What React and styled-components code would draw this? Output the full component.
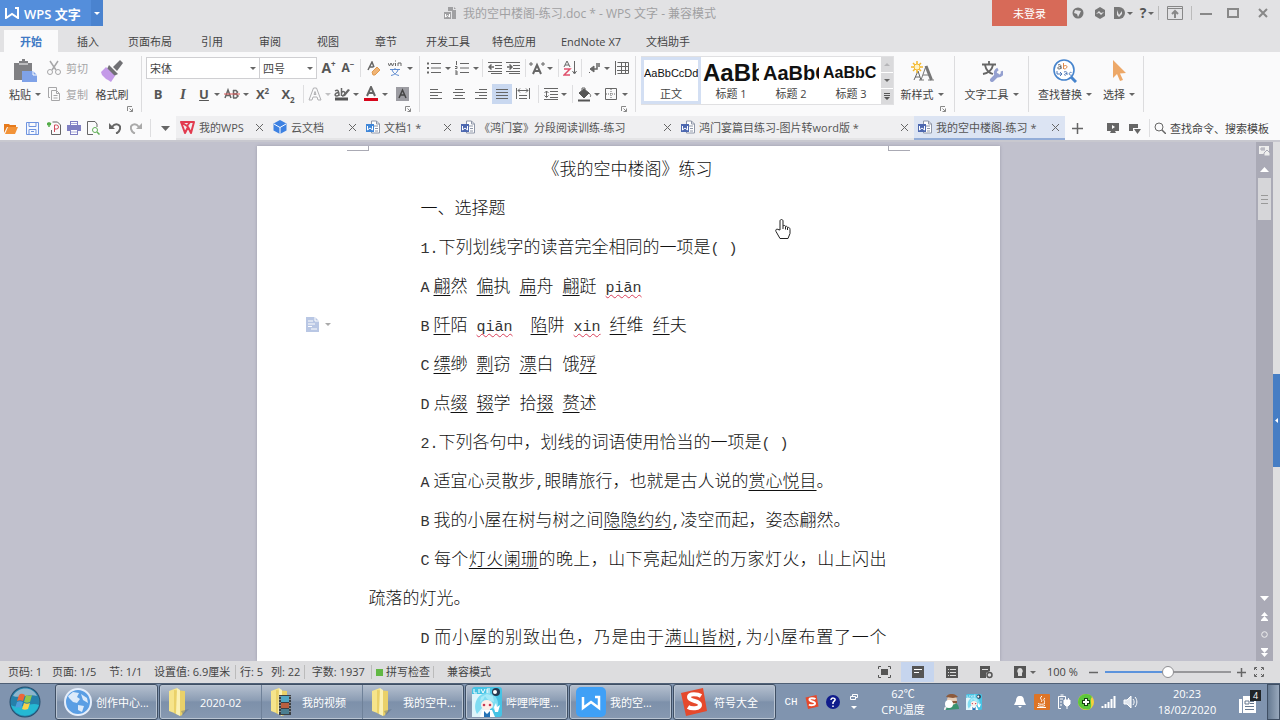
import { useState } from "react";
import styled, { createGlobalStyle, css } from "styled-components";

const GlobalStyle = createGlobalStyle`
  * {
    box-sizing: border-box;
  }
  body {
    margin: 0;
    font-family: "Open Sans", "Noto Sans CJK SC", sans-serif;
    font-size: 11px;
    color: #444;
  }
  button,
  select,
  input {
    margin: 0;
    padding: 0;
    border: 0;
    background: none;
    font: inherit;
    color: inherit;
  }
`;

const Window = styled.div`
  display: flex;
  flex-direction: column;
  height: 100vh;
  overflow: hidden;
  background: #e2e2e4;
`;

const Caret = styled.span`
  display: inline-block;
  flex: none;
  border: 3px solid transparent;
  border-top-color: ${(p) => p.$color || "#666"};
  border-bottom: 0;
`;

const Svg = ({ w = 16, h = w, children, ...rest }) => (
  <svg
    width={w}
    height={h}
    viewBox={`0 0 ${w} ${h}`}
    fill="none"
    stroke="#666"
    aria-hidden="true"
    {...rest}
  >
    {children}
  </svg>
);

/* Title bar */
const TitleBar = styled.header`
  display: flex;
  flex: none;
  height: 30px;
`;
const Brand = styled.button`
  display: flex;
  align-items: center;
  gap: 5px;
  width: 91px;
  height: 26px;
  padding-left: 5px;
  background: #548edb;
  color: #fff;
  font-size: 13px;
  font-weight: 600;
  white-space: nowrap;
`;
const BrandMenu = styled.button`
  display: flex;
  align-items: center;
  justify-content: center;
  width: 12px;
  height: 26px;
  background: #4a83cf;
`;
const DocTitle = styled.div`
  display: flex;
  flex: 1;
  align-items: center;
  justify-content: center;
  gap: 6px;
  height: 26px;
  padding-left: 64px;
  color: #a0a0a2;
  font-size: 12px;
  white-space: nowrap;
`;
const Login = styled.button`
  width: 75px;
  height: 26px;
  background: #d76a58;
  color: #fff;
`;
const WindowTool = styled.button`
  display: flex;
  align-items: center;
  justify-content: center;
  gap: 2px;
  width: ${(p) => p.$w || 22}px;
  height: 26px;
`;
const BarSep = styled.span`
  width: 1px;
  height: 14px;
  margin-top: 6px;
  background: #bbb;
`;

/* Ribbon tabs */
const TabList = styled.nav`
  display: flex;
  flex: none;
  height: 22px;
  padding-left: 4px;
`;
const RibbonTab = styled.button`
  width: ${(p) => p.$w || 58}px;
  height: 22px;
  white-space: nowrap;
  ${(p) =>
    p.$active &&
    css`
      margin-right: 1px;
      background: #fafafb;
      color: #4079c4;
      font-weight: 600;
    `}
`;

/* Ribbon */
const Ribbon = styled.div`
  display: flex;
  flex: none;
  height: 64px;
  padding: 4px 0;
  background: #fafafb;
`;
const Group = styled.section`
  position: relative;
  display: flex;
  height: 56px;
  padding: 0 ${(p) => p.$end || 0}px 0 ${(p) => p.$start || 0}px;
  border-right: 1px solid #dcdcde;
`;
const Rows = styled.div`
  display: flex;
  flex-direction: column;
  gap: 6px;
  padding-top: 2px;
`;
const Row = styled.div`
  display: flex;
  align-items: center;
  height: 20px;
`;
const Tool = styled.button`
  display: flex;
  flex: none;
  align-items: center;
  justify-content: center;
  width: ${(p) => p.$w || 20}px;
  height: 20px;
  background: ${(p) => (p.$active ? "#c9d8f0" : "none")};
`;
const ToolSep = styled.span`
  display: flex;
  flex: none;
  justify-content: center;
  width: ${(p) => p.$w || 8}px;
  &::after {
    content: "";
    width: 1px;
    height: 18px;
    background: #dedee0;
  }
`;
const SmallTool = styled.button`
  display: flex;
  align-items: center;
  gap: 4px;
  width: 44px;
  height: 20px;
  color: #a6a6a8;
  white-space: nowrap;
`;
const BigTool = styled.button`
  display: flex;
  flex-direction: column;
  align-items: center;
  width: ${(p) => p.$w || 44}px;
  height: 48px;
  padding-top: 2px;
`;
const BigIcon = styled.span`
  display: flex;
  align-items: center;
  height: 26px;
`;
const BigLabel = styled.span`
  display: flex;
  align-items: center;
  gap: 4px;
  height: 20px;
  white-space: nowrap;
`;
const Launcher = styled.button`
  position: absolute;
  right: ${(p) => p.$right || 8}px;
  bottom: 0;
  display: flex;
`;
const Field = styled.label`
  position: relative;
  display: flex;
  width: ${(p) => p.$w}px;
  height: 22px;
  border: 1px solid #cfcfd2;
  border-left-width: ${(p) => (p.$joined ? 0 : 1)}px;
  background: #fff;
  select {
    width: 100%;
    padding-left: 3px;
    appearance: none;
    outline: 0;
  }
  ${Caret} {
    position: absolute;
    top: 9px;
    right: 3px;
    pointer-events: none;
  }
`;
const Letter = styled.span`
  color: #555;
  font-size: ${(p) => p.$size || 13}px;
  font-weight: ${(p) => (p.$light ? 400 : 700)};
  line-height: 16px;
  ${(p) => p.$italic && "font-style: italic; font-family: 'Liberation Serif', serif;"}
  ${(p) => p.$underline && "text-decoration: underline;"}
  sup,
  sub {
    font-size: 8px;
    line-height: 0;
  }
`;

const Gallery = styled.div`
  display: flex;
  height: 49px;
  margin-left: 5px;
  border: 1px solid #e0e0e2;
  border-left: 0;
  background: #fff;
`;
const StyleCard = styled.button`
  display: flex;
  flex-direction: column;
  align-items: center;
  width: 60px;
  height: 47px;
  overflow: hidden;
  border: ${(p) => (p.$active ? "3px solid #d3dff3" : "0")};
  padding: ${(p) => (p.$active ? "0" : "3px 2px")};
`;
const Sample = styled.span`
  display: flex;
  flex: none;
  align-items: center;
  align-self: stretch;
  height: 26px;
  overflow: hidden;
  color: #111;
  font-family: "Liberation Sans", sans-serif;
  font-size: ${(p) => p.$size}px;
  font-weight: ${(p) => (p.$bold ? 700 : 400)};
`;
const StyleName = styled.span`
  line-height: 16px;
  white-space: nowrap;
`;
const GallerySteps = styled.div`
  display: flex;
  flex-direction: column;
  gap: 1px;
  width: 12px;
  button {
    display: flex;
    flex: 1;
    align-items: center;
    justify-content: center;
    background: #dadadc;
  }
`;

/* Quick access and document tabs */
const TabStrip = styled.div`
  display: flex;
  flex: none;
  align-items: center;
  height: 24px;
  background: #fafafb;
`;
const QuickTool = styled.button`
  display: flex;
  align-items: center;
  justify-content: center;
  width: ${(p) => p.$w || 21}px;
  height: 24px;
  margin-left: ${(p) => p.$gap || 0}px;
`;
const DocTab = styled.div`
  display: flex;
  align-items: center;
  width: ${(p) => p.$w}px;
  height: 24px;
  padding: 0 5px 0 4px;
  background: ${(p) => (p.$active ? "#dce4f3" : "#efeff1")};
  border-bottom: 2px solid ${(p) => (p.$active ? "#93add8" : "#e4e4e6")};
  white-space: nowrap;
`;
const DocTabName = styled.button`
  display: flex;
  flex: 1;
  align-items: center;
  gap: 4px;
  color: #555;
`;
const SearchBox = styled.label`
  display: flex;
  flex: 1;
  align-items: center;
  gap: 4px;
  padding-left: 1px;
  input {
    flex: 1;
    width: 60px;
    outline: 0;
  }
  input::placeholder {
    color: #444;
    opacity: 1;
  }
`;

/* Work area */
const Workspace = styled.main`
  display: flex;
  flex: 1;
  min-height: 0;
  border-top: 2px solid #c8c8cf;
`;
const Canvas = styled.div`
  display: flex;
  flex: 1;
  justify-content: center;
  padding-top: 4px;
  overflow: hidden;
  background: #c1c1cd;
`;
const Page = styled.article`
  position: relative;
  width: 743px;
  padding: 2px 113px 0 112px;
  background: #fff;
  box-shadow: 0 0 3px #9d9dab;
`;
const Corner = styled.span`
  position: absolute;
  top: 0;
  ${(p) => p.$side}: 90px;
  width: 22px;
  height: 5px;
  border-bottom: 1px solid #aaaab4;
  border-${(p) => (p.$side === "left" ? "right" : "left")}: 1px solid #aaaab4;
`;
const Para = styled.p`
  margin: 0;
  color: #111;
  font-family: "Noto Sans CJK SC", sans-serif;
  font-size: 17px;
  font-weight: 300;
  line-height: 39px;
  text-indent: 52px;
  text-align: justify;
  ${(p) => p.$full && "text-align-last: justify;"}
  u {
    text-decoration-thickness: 1px;
    text-decoration-skip-ink: none;
    text-underline-offset: 3px;
  }
`;
const Heading = styled(Para).attrs({ as: "h1" })`
  text-align: center;
  text-indent: 0;
`;
const Latin = styled.span`
  color: #333;
  font-family: "Liberation Mono", monospace;
  font-size: 15px;
  line-height: 1;
  white-space: pre;
`;
const Mark = styled(Latin)`
  margin-right: 4px;
`;
const Misspelt = styled(Latin)`
  text-decoration: underline wavy #d8405a 1px;
  text-decoration-skip-ink: none;
  text-underline-offset: 2px;
`;
const PasteTag = styled.button`
  position: absolute;
  top: 171px;
  left: 49px;
  display: flex;
  align-items: center;
  gap: 6px;
`;
const Hand = styled.span`
  position: absolute;
  top: 72px;
  left: 517px;
`;
const ScrollRail = styled.div`
  display: flex;
  flex-direction: column;
  align-items: center;
  width: 17px;
  background: #aaaab6;
`;
const RailButton = styled.button`
  display: flex;
  align-items: center;
  justify-content: center;
  width: 17px;
  height: 18px;
`;
const RailThumb = styled.div`
  display: flex;
  flex-direction: column;
  align-items: center;
  justify-content: center;
  gap: 3px;
  width: 13px;
  height: 42px;
  background: #d6d6d9;
  i {
    width: 7px;
    height: 1px;
    background: #999;
  }
`;
const Spacer = styled.span`
  flex: 1;
`;
const SideRail = styled.div`
  display: flex;
  flex-direction: column;
  justify-content: center;
  width: 7px;
  padding-top: 38px;
  background: #dedee0;
`;
const SideHandle = styled.button`
  display: flex;
  align-items: center;
  justify-content: center;
  width: 7px;
  height: 93px;
  background: #467dc4;
`;

/* Status bar */
const StatusBar = styled.footer`
  display: flex;
  flex: none;
  align-items: center;
  height: 22px;
  padding-left: 8px;
  background: #dddddf;
  white-space: nowrap;
`;
const StatusItem = styled.span`
  display: flex;
  align-items: center;
  gap: 3px;
  width: ${(p) => p.$w}px;
  line-height: 14px;
  ${(p) =>
    p.$ruled &&
    css`
      min-height: 12px;
      padding-left: 4px;
      border-left: 1px solid #bbb;
    `}
`;
const Spell = styled.i`
  width: 7px;
  height: 7px;
  background: #62b844;
`;
const ViewButton = styled.button`
  display: flex;
  align-items: center;
  justify-content: center;
  gap: 4px;
  width: ${(p) => p.$w || 34}px;
  height: 20px;
  padding-right: ${(p) => p.$end || 0}px;
  background: ${(p) => (p.$active ? "#c6d5ee" : "none")};
`;
const Zoom = styled.input.attrs({ type: "range" })`
  width: 126px;
  height: 16px;
  appearance: none;
  &::-webkit-slider-runnable-track {
    height: 2px;
    background: linear-gradient(90deg, #5c93dc 50%, #97979a 50%);
  }
  &::-webkit-slider-thumb {
    width: 12px;
    height: 12px;
    margin-top: -5px;
    appearance: none;
    border: 1px solid #8e8e92;
    border-radius: 50%;
    background: #fff;
  }
`;

/* Task bar */
const TaskBar = styled.footer`
  display: flex;
  flex: none;
  align-items: center;
  height: 37px;
  background: #8094af;
  border-top: 1px solid #4f6076;
  color: #fff;
  white-space: nowrap;
`;
const Start = styled.button`
  display: flex;
  align-items: center;
  justify-content: center;
  width: 55px;
  height: 36px;
  padding-right: 5px;
`;
const TaskGroup = styled.div`
  display: flex;
  height: 36px;
  margin-right: 1px;
  border: 1px solid #3f4f64;
  border-radius: 3px;
  background: linear-gradient(#b5c0cf, #8c9db4 45%, #7d90aa 50%, #8799b1);
  box-shadow: inset 0 0 0 1px #b9c4d2;
`;
const Task = styled.button`
  display: flex;
  align-items: center;
  width: 101px;
  padding-left: ${(p) => p.$pad || 6}px;
  text-align: left;
  & + & {
    border-left: 1px solid #6f8199;
  }
`;
const TaskIcon = styled.span`
  display: flex;
  width: ${(p) => p.$w || 34}px;
`;
const Tray = styled.div`
  display: flex;
  flex: 1;
  align-items: center;
  justify-content: flex-end;
  height: 36px;
`;
const TrayItem = styled.button`
  display: flex;
  flex-direction: column;
  align-items: center;
  justify-content: center;
  width: ${(p) => p.$w || 22}px;
  height: 34px;
  line-height: 16px;
  font-family: ${(p) => (p.$mono ? '"Liberation Mono", monospace' : "inherit")};
`;
const ShowDesktop = styled.button`
  width: 13px;
  height: 36px;
  border: 1px solid #3f4f64;
  background: linear-gradient(90deg, #667a92, #98a8bc);
`;

const LauncherIcon = () => (
  <Svg w={6} stroke="#888">
    <path d="M.5 5V.5H5M2.5 2.5l3 3M5.500 2.500v3h-3" />
  </Svg>
);
const CloseIcon = () => (
  <Svg w={9} stroke="#666">
    <path d="M1 1l7 7M8 1L1 8" />
  </Svg>
);

const WIcon = ({ color = "#4d68b0" }) => (
  <Svg w={14}>
    <path d="M5.500 1h5l3 3v9h-8z" fill="#fff" stroke="#8e96a8" />
    <path d="M10.500 1v3h3M8 6h4M9 8.500h3M9 11h3" stroke="#8e96a8" />
    <rect y="4" width="8" height="8" fill={color} stroke="none" />
    <path d="M1.500 6v4l2.500-2 2.500 2V6" stroke="#fff" />
  </Svg>
);
const WpsIcon = () => (
  <Svg w={15} h={13}>
    <path d="M1 1h13l-3 11-3-6-3 6L1 1l6 4 3-4" stroke="#e23b4f" strokeWidth="2" strokeLinejoin="round" />
  </Svg>
);
const CloudIcon = () => (
  <Svg w={14}>
    <path d="M7 0l6.500 3.500v7L7 14 .5 10.500v-7z" fill="#3d81e2" stroke="none" />
    <path d="M1 4l6 3.500L13 4M7 7.500V14" stroke="#fff" />
  </Svg>
);

const Lines = ({ rows, dots }) => (
  <Svg w={14}>
    <path d={rows.map(([x, w], i) => `M${x} ${dots ? 2.5 + i * 4.5 : 2.5 + i * 3}h${w}`).join("")} />
    {dots === "bullet" && <path d="M0 2.500h2M0 7h2M0 11.500h2" strokeWidth="2" />}
    {dots === "number" && <path d="M1.500 0v4M0 5.500h2v2H0M0 10h2v4H0M0 12h2" strokeWidth="1" />}
  </Svg>
);
const IndentIcon = ({ flip }) => (
  <Svg w={14}>
    <path d="M0 1.500h14M7 4.500h7M7 7.500h7M0 10.500h14M3 12.500h11" />
    <path d={flip ? "M1 6h5M3.500 3.500L6 6 3.500 8.500" : "M1 6h5M3.500 3.500L1 6l2.500 2.500"} strokeWidth="1.500" />
  </Svg>
);

const FolderIcon = ({ media }) => (
  <Svg w={28} h={30} stroke="none">
    <path d="M3 4l8-3v26l-8-3z" fill="#f6e48b" />
    <path d="M8 3l11 1v20l-4 5-7-3z" fill="#ead169" />
    <path d="M11 1l3 2v26l-4-2z" fill="#fbf1b5" />
    <path d="M15 24l8-2-6 6z" fill="#52647c" opacity=".4" />
    {media && (
      <>
        <path d="M11 8h12v20H11z" fill="#3b4045" />
        <path d="M13 9h8v6h-8z" fill="#4fa7c5" />
        <path d="M13 16h8v5h-8z" fill="#b95f40" />
        <path d="M13 22h8v5h-8z" fill="#4b7e91" />
        <path d="M12 9v18M22 9v18" stroke="#d5d8dc" strokeDasharray="1 2" />
      </>
    )}
  </Svg>
);
const GirlIcon = ({ w = 30 }) => (
  <svg width={w} height={w} viewBox="0 0 30 30" aria-hidden="true">
    <rect width="30" height="30" rx="3" fill="#46c3e4" />
    <path d="M0 7h18v23H0z" fill="#dff5fb" />
    <path d="M2 2v4h3M7 2v4M9 2l2 4 2-4M18 2h-3v4h3M15 4h3" stroke="#fff" fill="none" />
    <path d="M5 27C0 17 6 6 15 6c10 0 14 11 9 18l-5-4-9 1z" fill="#7fdcf2" />
    <circle cx="24" cy="5" r="4" fill="#26384f" />
    <circle cx="23" cy="5" r="2" fill="#fff" />
    <ellipse cx="15" cy="18" rx="6" ry="5" fill="#fdeee8" />
    <path d="M8 15c3-1 4-4 5-6 2 4 6 5 9 6l-1-6-6-2-6 3z" fill="#a7eaf8" />
    <circle cx="12" cy="18" r="1.300" fill="#c63852" />
    <circle cx="18" cy="18" r="1.300" fill="#c63852" />
    <path d="M10 23h10l3 7H8z" fill="#fff" />
    <path d="M12 24l3 3 3-3v6h-6z" fill="#2572b5" />
    <path d="M22 20l2-4 1 4 3-2-2 7h-3z" fill="#fff" />
  </svg>
);
const SogouIcon = ({ w = 28 }) => (
  <svg width={w} height={w} viewBox="0 0 28 28" fill="none" aria-hidden="true">
    <path d="M1 5L23 0l4 23-21 5z" fill="#e5492c" />
    <path d="M21 8c-3-2-12-3-12 1 0 5 11 3 11 8 0 4-9 4-12 2" stroke="#fff" strokeWidth="4" />
  </svg>
);

const ribbonTabs = [
  ["开始", 54],
  ["插入", 58],
  ["页面布局", 66],
  ["引用", 58],
  ["审阅", 58],
  ["视图", 58],
  ["章节", 58],
  ["开发工具", 66],
  ["特色应用", 66],
  ["EndNote X7", 88],
  ["文档助手", 66],
];

const docTabs = [
  { name: "我的WPS", w: 93, icon: <WpsIcon /> },
  { name: "云文档", w: 93, icon: <CloudIcon /> },
  { name: "文档1 *", w: 95, icon: <WIcon color="#3f86d8" /> },
  { name: "《鸿门宴》分段阅读训练-练习", w: 220, icon: <WIcon /> },
  { name: "鸿门宴篇目练习-图片转word版 *", w: 237, icon: <WIcon /> },
  { name: "我的空中楼阁-练习 *", w: 151, icon: <WIcon /> },
];

const styleCards = [
  { name: "正文", sample: "AaBbCcDd", size: 11 },
  { name: "标题 1", sample: "AaBb", size: 24, bold: true },
  { name: "标题 2", sample: "AaBbC", size: 20, bold: true },
  { name: "标题 3", sample: "AaBbC", size: 16, bold: true },
];

const Title = () => (
  <TitleBar>
    <Brand>
      <Svg w={14} h={12} stroke="#fff">
        <path d="M1 1v10l6-4 6 4V1h-3" strokeWidth="2" />
      </Svg>
      WPS 文字
    </Brand>
    <BrandMenu aria-label="菜单">
      <Caret $color="#fff" />
    </BrandMenu>
    <DocTitle>
      <Svg w={14} stroke="none">
        <path d="M5 1h5v3h3v9H9V5H5z" fill="#a0a0a2" />
        <path d="M11 1l2 2h-2zM1 6h7v7H1z" fill="#a0a0a2" />
        <path d="M2.500 8v3l2-1.500 2 1.500V8" stroke="#fff" />
      </Svg>
      我的空中楼阁-练习.doc * - WPS 文字 - 兼容模式
    </DocTitle>
    <Login>未登录</Login>
    <WindowTool aria-label="安全">
      <Svg w={12} stroke="none">
        <circle cx="6" cy="6" r="5.500" fill="#777" />
        <path d="M3 3l6 1-3 6-1-3-3-1z" fill="#e2e2e4" />
      </Svg>
    </WindowTool>
    <WindowTool aria-label="同步">
      <Svg w={12} stroke="none">
        <path d="M6 0l5 3v6l-5 3-5-3V3z" fill="#777" />
        <path d="M2 7l3-3 2 2 3-1-3 3-2-2z" fill="#e2e2e4" />
      </Svg>
    </WindowTool>
    <WindowTool $w={25} aria-label="稻壳">
      <Svg w={11} h={12} stroke="none">
        <path d="M0 0h5a6 6 0 010 12H0z" fill="#777" />
        <path d="M3 3v5l2 2 3-3V4L5 8z" fill="#e2e2e4" />
      </Svg>
      <Caret />
    </WindowTool>
    <WindowTool aria-label="帮助">
      <Letter $size={14}>?</Letter>
      <Caret />
    </WindowTool>
    <BarSep />
    <WindowTool $w={32} aria-label="收起功能区">
      <Svg w={16} h={14} stroke="#888">
        <path d="M.5.5h15v13H.5zM.5 2.500h15" />
        <path d="M8 12V5M5 8l3-3 3 3" strokeWidth="2" />
      </Svg>
    </WindowTool>
    <BarSep />
    <WindowTool $w={28} aria-label="最小化">
      <Svg w={12}>
        <path d="M0 7h12" stroke="#888" strokeWidth="2" />
      </Svg>
    </WindowTool>
    <WindowTool $w={26} aria-label="最大化">
      <Svg w={12} h={10}>
        <path d="M1 1h10v8H1z" stroke="#888" strokeWidth="2" />
      </Svg>
    </WindowTool>
    <WindowTool $w={34} aria-label="关闭">
      <Svg w={10}>
        <path d="M1 1l8 8M9 1L1 9" stroke="#888" strokeWidth="2" />
      </Svg>
    </WindowTool>
  </TitleBar>
);

const ClipboardGroup = () => (
  <Group $start={4} $end={7}>
    <BigTool $w={42}>
      <BigIcon>
        <Svg w={24} stroke="none">
          <path d="M1 4h5V2h3V0h3v2h3v2h4v9h-7v8H1z" fill="#808083" />
          <path d="M6 5h9" stroke="#fafafb" />
          <path d="M9 12h11l4 4v7H9z" fill="#7fa2e8" />
          <path d="M20 12v4h4" stroke="#fff" />
        </Svg>
      </BigIcon>
      <BigLabel>
        粘贴
        <Caret />
      </BigLabel>
    </BigTool>
    <Rows>
      <SmallTool>
        <Svg w={16} stroke="#a6a6a8">
          <path d="M4 1l6 9M12 1L6 10" strokeWidth="1.500" />
          <circle cx="4" cy="12" r="2.500" />
          <circle cx="12" cy="12" r="2.500" />
        </Svg>
        剪切
      </SmallTool>
      <SmallTool>
        <Svg w={16} stroke="#a6a6a8">
          <path d="M4 11.500H2.500v-10h8V4" />
          <path d="M5.500 4.500h5l3 3v7h-8zM10.500 4.500v3h3M7.500 9.500h4M7.500 12h4" />
        </Svg>
        复制
      </SmallTool>
    </Rows>
    <BigTool>
      <BigIcon>
        <Svg w={24} stroke="none">
          <path d="M9 6l9 9-4 2-7-7z" fill="#707074" />
          <path d="M13 8l7-7 3 3-6 8z" fill="#707074" />
          <path d="M6 8l9 9-4 6-3-2-2-1-4-4-1-3z" fill="#c49ae8" />
        </Svg>
      </BigIcon>
      <BigLabel>格式刷</BigLabel>
    </BigTool>
    <Launcher aria-label="剪贴板">
      <LauncherIcon />
    </Launcher>
  </Group>
);

const FontGroup = () => (
  <Group $start={4} $end={3}>
    <Rows>
      <Row>
        <Field $w={114}>
          <select aria-label="字体">
            <option>宋体</option>
          </select>
          <Caret />
        </Field>
        <Field $w={57} $joined>
          <select aria-label="字号">
            <option>四号</option>
          </select>
          <Caret />
        </Field>
        <Tool $w={23}>
          <Letter $size={14}>
            A<sup>+</sup>
          </Letter>
        </Tool>
        <Tool $w={16}>
          <Letter $size={12}>
            A<sup>−</sup>
          </Letter>
        </Tool>
        <ToolSep />
        <Tool aria-label="清除格式">
          <Svg w={14} h={15}>
            <path d="M1 9l4-8 2 5M2.500 6h4" strokeWidth="1.500" />
            <path d="M5 11l5-5 3 3-5 5H6z" fill="#f0b475" stroke="#e09a50" />
          </Svg>
        </Tool>
        <Tool $w={22} aria-label="拼音指南">
          <Svg w={14} h={16}>
            <path d="M0 3l1.500 3L3 3l1.500 3L6 3M7.500 3v3M7.500.5v1M10 6V3h3v3" />
            <path d="M2 9.500h10M7 8v2M10 10c-1 3-4 5-7 5.500M4 10c1 3 4 5 7 5.500" stroke="#5d8bd0" />
          </Svg>
        </Tool>
        <Tool $w={8}>
          <Caret />
        </Tool>
      </Row>
      <Row>
        <Tool $w={24}>
          <Letter>B</Letter>
        </Tool>
        <Tool $w={26}>
          <Letter $size={15} $italic>
            I
          </Letter>
        </Tool>
        <Tool $w={16}>
          <Letter $underline>U</Letter>
        </Tool>
        <Tool $w={10}>
          <Caret />
        </Tool>
        <Tool aria-label="删除线">
          <Svg w={16} h={14}>
            <path
              d="M1 11l3-8 3 8M2 8.500h4M9.500 3v8M9 3.500h3l1.500 1.500L12 7h-2.500H12l2 2-2 2H9"
              strokeWidth="1.500"
            />
            <path d="M0 7h16" stroke="#dc5a5a" />
          </Svg>
        </Tool>
        <Tool $w={8}>
          <Caret />
        </Tool>
        <Tool $w={25}>
          <Letter>
            X<sup>2</sup>
          </Letter>
        </Tool>
        <Tool $w={26}>
          <Letter>
            X<sub>2</sub>
          </Letter>
        </Tool>
        <ToolSep $w={5} />
        <Tool $w={17} aria-label="文字效果">
          <Svg w={14}>
            <path d="M1 13L5.500 1h3L13 13h-3l-1-3H5l-1 3zM6 7.500h2L7 4.500z" stroke="#b0b0b3" />
          </Svg>
        </Tool>
        <Tool $w={9}>
          <Caret $color="#c0c0c2" />
        </Tool>
        <Tool aria-label="突出显示">
          <Svg w={16} h={14}>
            <path d="M1 4c3-2 4 0 4 5M5 6C1 5 0 9 2.500 9S5 8 5 7M7.500 1v8M8 5c4-2 4 4 0 4" strokeWidth="1.500" />
            <path d="M9 8l5-6 2 1-5 6H9z" fill="#666" stroke="none" />
            <path d="M1 12h13" strokeWidth="3" stroke="#555" />
          </Svg>
        </Tool>
        <Tool $w={8}>
          <Caret />
        </Tool>
        <Tool $w={22} aria-label="字体颜色">
          <Svg w={14} h={16}>
            <path d="M3 10l4-9 4 9M4 7h6" strokeWidth="2" />
            <path d="M0 13.500h14" stroke="#d7061b" strokeWidth="3" />
          </Svg>
        </Tool>
        <Tool $w={6}>
          <Caret />
        </Tool>
        <Tool $w={28} aria-label="字符底纹">
          <Svg w={13} h={14}>
            <path d="M0 0h13v14H0z" fill="#9c9ca2" stroke="none" />
            <path d="M3 11l3.500-8 3.500 8M4 8h5" stroke="#444" strokeWidth="1.500" />
          </Svg>
        </Tool>
      </Row>
    </Rows>
    <Launcher aria-label="字体设置">
      <LauncherIcon />
    </Launcher>
  </Group>
);

const ParagraphGroup = () => (
  <Group $start={4} $end={3}>
    <Rows>
      <Row>
        <Tool aria-label="项目符号">
          <Lines dots="bullet" rows={[[4, 10], [4, 10], [4, 10]]} />
        </Tool>
        <Tool $w={7}>
          <Caret />
        </Tool>
        <Tool $w={22} aria-label="编号">
          <Lines dots="number" rows={[[5, 9], [5, 9], [5, 9]]} />
        </Tool>
        <Tool $w={6}>
          <Caret />
        </Tool>
        <ToolSep $w={6} />
        <Tool $w={19} aria-label="减少缩进量">
          <IndentIcon />
        </Tool>
        <Tool $w={18} aria-label="增加缩进量">
          <IndentIcon flip />
        </Tool>
        <ToolSep $w={6} />
        <Tool $w={18} aria-label="中文版式">
          <Svg w={16} h={15}>
            <path d="M4 13l4-9 4 9M5 10h6" strokeWidth="2" />
            <path d="M0 3h4M2 1v4M12 3h4M14 1v4" />
          </Svg>
        </Tool>
        <Tool $w={8}>
          <Caret />
        </Tool>
        <ToolSep />
        <Tool $w={15} aria-label="排序">
          <Svg w={14} h={16}>
            <path d="M1 7l3-6 3 6M2 5h4" />
            <path d="M1 9h6l-6 6h6" stroke="#e0506c" strokeWidth="1.500" />
            <path d="M11.500 1v12M9.500 11l2 3 2-3" />
          </Svg>
        </Tool>
        <ToolSep />
        <Tool $w={17} aria-label="段落标记">
          <Svg w={12}>
            <path d="M9 1v6H4M11 1v4" strokeWidth="1.500" />
            <path d="M6 4v6L2 7zM1 10l1 1" fill="#666" />
          </Svg>
        </Tool>
        <Tool $w={10}>
          <Caret />
        </Tool>
        <Tool aria-label="插入表格">
          <Svg w={14}>
            <path d="M2.500 1.500h11v11h-11M2 5.500h12M2 9.500h12M6.500 1v12M10.500 1v12M.5 0v14" />
          </Svg>
        </Tool>
      </Row>
      <Row>
        <Tool $w={24} aria-label="左对齐">
          <Lines rows={[[1, 8], [1, 12], [1, 8], [1, 12]]} />
        </Tool>
        <Tool $w={22} aria-label="居中">
          <Lines rows={[[3, 8], [1, 12], [3, 8], [1, 12]]} />
        </Tool>
        <Tool $w={22} aria-label="右对齐">
          <Lines rows={[[5, 8], [1, 12], [5, 8], [1, 12]]} />
        </Tool>
        <Tool $active aria-label="两端对齐">
          <Lines rows={[[1, 12], [1, 12], [1, 12], [1, 12]]} />
        </Tool>
        <Tool $w={22} aria-label="分散对齐">
          <Svg w={14}>
            <path d="M.5 1v11M13.500 1v11M2 3.500h10M4 1.500l-2 2 2 2M10 1.500l2 2-2 2M3 8.500h8M3 11.500h8" />
          </Svg>
        </Tool>
        <ToolSep />
        <Tool $w={18} aria-label="行距">
          <Svg w={14}>
            <path d="M0 1.500h14M6 4.500h8M6 7.500h8M6 10.500h8M0 12.500h14M2.500 4v6M.5 6l2-2 2 2M.5 8.500l2 2 2-2" />
          </Svg>
        </Tool>
        <Tool $w={8}>
          <Caret />
        </Tool>
        <ToolSep />
        <Tool $w={17} aria-label="底纹颜色">
          <Svg w={15}>
            <path d="M2 6l5-4 5 4-5 5z" fill="#555" stroke="#555" />
            <path d="M5 4V1h3v2M12 6c2 2 2 3 1 4" />
            <path d="M1 13.500h12" strokeWidth="2" stroke="#555" />
          </Svg>
        </Tool>
        <Tool $w={8}>
          <Caret />
        </Tool>
        <Tool aria-label="边框">
          <Svg w={12}>
            <path d="M.5.5h11v11H.5z" />
            <path d="M6 1v10M1 6h10" strokeDasharray="1 1" />
          </Svg>
        </Tool>
        <Tool $w={8}>
          <Caret />
        </Tool>
      </Row>
    </Rows>
    <Launcher aria-label="段落设置">
      <LauncherIcon />
    </Launcher>
  </Group>
);

const StyleGroup = () => {
  const [current, setCurrent] = useState("正文");
  return (
    <Group $end={4}>
      <Gallery>
        {styleCards.map((card) => (
          <StyleCard key={card.name} $active={card.name === current} onClick={() => setCurrent(card.name)}>
            <Sample $size={card.size} $bold={card.bold}>
              {card.sample}
            </Sample>
            <StyleName>{card.name}</StyleName>
          </StyleCard>
        ))}
        <GallerySteps>
          <button aria-label="上一行">
            <Svg w={6} h={3} stroke="none">
              <path d="M0 3l3-3 3 3z" fill="#b5b5b8" />
            </Svg>
          </button>
          <button aria-label="下一行">
            <Caret />
          </button>
          <button aria-label="更多样式">
            <Svg w={6} h={7} stroke="none">
              <path d="M0 0h6v1H0zM0 2h6v1H0zM0 4h6L3 7z" fill="#555" />
            </Svg>
          </button>
        </GallerySteps>
      </Gallery>
      <BigTool $w={56}>
        <BigIcon>
          <Svg w={24} h={22}>
            <path d="M4 20l4-9 3 9M5 17h5" />
            <path d="M11 20l5-14M13 15h7" stroke="#777" />
            <path d="M16 6l5.500 14" strokeWidth="3" stroke="#777" />
            <path d="M9 20h5M18 20h6" stroke="#777" />
            <path d="M7 1v12M1 7h12M3 3l8 8M11 3l-8 8" stroke="#f3b92f" strokeWidth="1.500" />
            <circle cx="7" cy="7" r="3" fill="#fff3c6" stroke="#f3b92f" />
          </Svg>
        </BigIcon>
        <BigLabel>
          新样式
          <Caret />
        </BigLabel>
      </BigTool>
      <Launcher aria-label="样式设置">
        <LauncherIcon />
      </Launcher>
    </Group>
  );
};

const EditGroups = () => (
  <>
    <Group>
      <BigTool $w={73}>
        <BigIcon>
          <Svg w={22}>
            <path d="M1 4.500h14M8 1v3M12 5c-1 5-5 8-10 9M4 5c1 5 4 8 8 9" stroke="#666" strokeWidth="1.800" />
            <path d="M11 20l5-5" stroke="#94a0d0" strokeWidth="4" strokeLinecap="round" />
            <path d="M17 9c-4 2-3 7 0 7s5-2 4-5" stroke="#94a0d0" strokeWidth="3" />
          </Svg>
        </BigIcon>
        <BigLabel>
          文字工具
          <Caret />
        </BigLabel>
      </BigTool>
    </Group>
    <Group $end={6}>
      <BigTool $w={72}>
        <BigIcon>
          <Svg w={24}>
            <circle cx="11" cy="11" r="10" fill="#fff" stroke="#4684cd" strokeWidth="1.600" />
            <path d="M18 18l5 5" stroke="#4684cd" strokeWidth="3" />
            <path d="M5 6c3-1 3 0 3 4M8 7.500c-4 0-4 2.500-2 2.500S8 9 8 8" />
            <path d="M10.500 4v6M11 7c4-2 4 3 0 3" stroke="#e08a4a" />
            <path
              d="M4 12v3h4M7 13l2 2-2 2M11 13c3-1 3 0 3 3M14 14.500c-3 0-3 2-1.500 2M18.500 13.500c-3-1-3 3.500 0 2.500"
              stroke="#4f79b8"
            />
          </Svg>
        </BigIcon>
        <BigLabel>
          查找替换
          <Caret />
        </BigLabel>
      </BigTool>
      <BigTool $w={36}>
        <BigIcon>
          <Svg w={16} h={22} stroke="none">
            <path d="M2 0l13 13-6 .5L12 20l-3 1-3-7-4 4z" fill="#eda868" />
          </Svg>
        </BigIcon>
        <BigLabel>
          选择
          <Caret />
        </BigLabel>
      </BigTool>
    </Group>
  </>
);

const Documents = () => (
  <TabStrip>
    <QuickTool $w={22} aria-label="打开">
      <Svg w={14} h={12} stroke="none">
        <path d="M0 2h5l1 1h6v2H3l-3 6z" fill="#e67a1c" />
        <path d="M4 5h10l-3 7H1z" fill="#f29338" />
      </Svg>
    </QuickTool>
    <QuickTool aria-label="保存">
      <Svg w={13}>
        <path d="M.5.5h12v12H.5zM3 .5v4h7v-4M3 12.500v-5h7v5" stroke="#6e93df" fill="#f4f8ff" />
        <path d="M5 9.500h3" stroke="#6e93df" />
      </Svg>
    </QuickTool>
    <QuickTool aria-label="输出为PDF">
      <Svg w={14}>
        <path d="M5.500 1h5l3 3v9.500h-9V9" />
        <path d="M7.500 11V4h2a2 2 0 010 4H7" stroke="#d44d5e" />
        <path d="M0 3.500h4M2 1v5M0 2l2 1.500L4 2" stroke="#53ac48" strokeWidth="1.500" />
      </Svg>
    </QuickTool>
    <QuickTool $w={19} aria-label="打印">
      <Svg w={14} stroke="none">
        <path d="M3 0h8v4h3v6h-3v4H3v-4H0V4h3z" fill="#7f7fc2" />
        <path d="M4 1h6v3H4zM4 9h6v4H4z" fill="#fff" />
        <path d="M4 2.500h6M4 11h6" stroke="#aaaada" />
      </Svg>
    </QuickTool>
    <QuickTool aria-label="打印预览">
      <Svg w={13} h={14}>
        <path d="M10 6V3L8 .5H.5v13H6" />
        <circle cx="8" cy="9" r="2.500" stroke="#5fae55" fill="#fff" />
        <path d="M10 11l2.500 2.500" stroke="#5fae55" strokeWidth="1.500" />
      </Svg>
    </QuickTool>
    <QuickTool aria-label="撤销">
      <Svg w={12}>
        <path d="M3 5c4-5 9-2 8 2-.5 2-2 4-4 4.500" strokeWidth="2" />
        <path d="M0 1v6h6z" fill="#666" stroke="none" />
      </Svg>
    </QuickTool>
    <QuickTool aria-label="恢复">
      <Svg w={12}>
        <path d="M9 5C5 0 0 3 1 7c.5 2 2 4 4 4.500" strokeWidth="2" stroke="#aaa" />
        <path d="M12 1v6H6z" fill="#aaa" stroke="none" />
      </Svg>
    </QuickTool>
    <ToolSep $w={8} />
    <QuickTool $w={22} aria-label="自定义快速访问工具栏">
      <Svg w={9} h={5} stroke="none">
        <path d="M0 0h9L4.500 5z" fill="#666" />
      </Svg>
    </QuickTool>
    {docTabs.map((tab, i) => (
      <DocTab key={tab.name} $w={tab.w} $active={i === docTabs.length - 1}>
        <DocTabName>
          {tab.icon}
          {tab.name}
        </DocTabName>
        <button aria-label="关闭标签">
          <CloseIcon />
        </button>
      </DocTab>
    ))}
    <QuickTool $w={24} aria-label="新建">
      <Svg w={11}>
        <path d="M0 5.500h11M5.500 0v11" strokeWidth="1.500" />
      </Svg>
    </QuickTool>
    <QuickTool $w={24} $gap={12} aria-label="播放">
      <Svg w={12} h={11} stroke="none">
        <path d="M0 0h12v8H8l1 2H3l1-2H0z" fill="#666" />
        <path d="M5 2l3 2-3 2z" fill="#fff" />
      </Svg>
    </QuickTool>
    <QuickTool $w={20} aria-label="切换窗口">
      <Svg w={12} h={11} stroke="none">
        <path d="M0 1h9v4H4v3H0z" fill="#666" />
        <path d="M5 6h7l-3.500 5z" fill="#666" />
      </Svg>
    </QuickTool>
    <ToolSep />
    <SearchBox>
      <Svg w={12}>
        <circle cx="5" cy="5" r="4" />
        <path d="M8 8l4 4" strokeWidth="1.500" />
      </Svg>
      <input aria-label="搜索" placeholder="查找命令、搜索模板" />
    </SearchBox>
  </TabStrip>
);

const Editor = () => (
  <Workspace>
    <Canvas>
      <Page>
        <Corner $side="left" />
        <Corner $side="right" />
        <Heading>《我的空中楼阁》练习</Heading>
        <Para>一、选择题</Para>
        <Para>
          <Latin>1.</Latin>下列划线字的读音完全相同的一项是<Latin>( )</Latin>
        </Para>
        <Para>
          <Mark>A</Mark>
          <u>翩</u>然<Latin> </Latin>
          <u>偏</u>执<Latin> </Latin>
          <u>扁</u>舟<Latin> </Latin>
          <u>翩</u>跹<Latin> </Latin>
          <Misspelt>piān</Misspelt>
        </Para>
        <Para>
          <Mark>B</Mark>
          <u>阡</u>陌<Latin> </Latin>
          <Misspelt>qiān</Misspelt>
          <Latin>{"  "}</Latin>
          <u>陷</u>阱<Latin> </Latin>
          <Misspelt>xin</Misspelt>
          <Latin> </Latin>
          <u>纤</u>维<Latin> </Latin>
          <u>纤</u>夫
        </Para>
        <Para>
          <Mark>C</Mark>
          <u>缥</u>缈<Latin> </Latin>
          <u>剽</u>窃<Latin> </Latin>
          <u>漂</u>白<Latin> </Latin>饿<u>殍</u>
        </Para>
        <Para>
          <Mark>D</Mark>点<u>缀</u>
          <Latin> </Latin>
          <u>辍</u>学<Latin> </Latin>拾<u>掇</u>
          <Latin> </Latin>
          <u>赘</u>述
        </Para>
        <Para>
          <Latin>2.</Latin>下列各句中，划线的词语使用恰当的一项是<Latin>( )</Latin>
        </Para>
        <Para>
          <Mark>A</Mark>适宜心灵散步<Latin>,</Latin>眼睛旅行，也就是古人说的<u>赏心悦目</u>。
        </Para>
        <Para>
          <Mark>B</Mark>我的小屋在树与树之间<u>隐隐约约</u>
          <Latin>,</Latin>凌空而起，姿态翩然。
        </Para>
        <Para>
          <Mark>C</Mark>每个<u>灯火阑珊</u>的晚上，山下亮起灿烂的万家灯火，山上闪出疏落的灯光。
        </Para>
        <Para $full>
          <Mark>D</Mark>而小屋的别致出色，乃是由于<u>满山皆树</u>
          <Latin>,</Latin>为小屋布置了一个
        </Para>
        <PasteTag aria-label="粘贴选项">
          <Svg w={13} h={15}>
            <path d="M0 0h9l4 4v11H0z" fill="#b9c7e4" stroke="none" />
            <path d="M2 4h5M2 7h7M2 9.500h4M5 12h6M9 0v4h4" stroke="#fff" />
          </Svg>
          <Caret $color="#aaa" />
        </PasteTag>
        <Hand>
          <Svg w={17} h={22}>
            <path
              d="M6 12V3c0-2 3-2 3 0v5c1-1 2.500-.5 2.500.5 1-.5 2 0 2 1 1.500-.5 2.500.5 2.500 2v4l-2 5H6l-4-7c-1-2 1-3 2-2z"
              fill="#fff"
              stroke="#222"
            />
            <path d="M9 8v3M11.500 9v2.500M13.500 10v2" stroke="#222" />
          </Svg>
        </Hand>
      </Page>
    </Canvas>
    <ScrollRail>
      <RailButton aria-label="视图选项">
        <Svg w={11} h={10} stroke="none">
          <path d="M0 0h10v5H7v3H0z" fill="#eee" />
          <path d="M3 1v4M5 1v4M1 3h5" stroke="#aaaab6" />
          <path d="M5 10V7l3-3 3 3v3z" fill="#eee" stroke="#aaaab6" />
        </Svg>
      </RailButton>
      <RailButton aria-label="向上">
        <Svg w={9} h={5} stroke="none">
          <path d="M0 5l4.500-5L9 5z" fill="#fff" />
        </Svg>
      </RailButton>
      <RailThumb>
        <i />
        <i />
        <i />
      </RailThumb>
      <Spacer />
      <RailButton aria-label="向下">
        <Svg w={9} h={5} stroke="none">
          <path d="M0 0l4.500 5L9 0z" fill="#fff" />
        </Svg>
      </RailButton>
      <RailButton aria-label="上一页">
        <Svg w={7} h={9} stroke="none">
          <path d="M0 4l3.500-4L7 4zM0 8l3.500-4L7 8v1H0z" fill="#fff" />
        </Svg>
      </RailButton>
      <RailButton aria-label="选择浏览对象">
        <Svg w={7} stroke="#eee">
          <circle cx="3.500" cy="3.500" r="2.800" />
        </Svg>
      </RailButton>
      <RailButton aria-label="下一页">
        <Svg w={7} h={9} stroke="none">
          <path d="M0 0h7v1L3.500 5 0 1zM0 5l3.500 4L7 5z" fill="#fff" />
        </Svg>
      </RailButton>
    </ScrollRail>
    <SideRail>
      <SideHandle aria-label="展开任务窗格">
        <Svg w={3} h={5} stroke="none">
          <path d="M3 0v5L0 2.500z" fill="#fff" />
        </Svg>
      </SideHandle>
    </SideRail>
  </Workspace>
);

const Status = () => {
  const [zoom, setZoom] = useState(100);
  return (
    <StatusBar>
      <StatusItem $w={44}>页码: 1</StatusItem>
      <StatusItem $w={57}>页面: 1/5</StatusItem>
      <StatusItem $w={45}>节: 1/1</StatusItem>
      <StatusItem $w={81}>设置值: 6.9厘米</StatusItem>
      <StatusItem $w={36} $ruled>
        行: 5
      </StatusItem>
      <StatusItem $w={33}>列: 22</StatusItem>
      <StatusItem $w={67} $ruled>
        &nbsp;字数: 1937
      </StatusItem>
      <StatusItem $w={62} $ruled>
        <Spell />
        拼写检查
      </StatusItem>
      <StatusItem $w={14} $ruled />
      <StatusItem $w={60}>兼容模式</StatusItem>
      <Spacer />
      <ViewButton aria-label="全屏显示">
        <Svg w={13} h={12} stroke="none">
          <path d="M3 3h7v6H3z" fill="#555" />
          <path d="M.5 3V.5H3M10 .5h2.500V3M12.500 9v2.500H10M3 11.500H.5V9" stroke="#555" />
        </Svg>
      </ViewButton>
      <ViewButton $w={33} $active aria-label="页面视图">
        <Svg w={12} stroke="none">
          <path d="M0 0h12v12H0z" fill="#555" />
          <path d="M2 3.500h8M2 6.500h5" stroke="#fff" />
        </Svg>
      </ViewButton>
      <ViewButton $w={36} aria-label="大纲视图">
        <Svg w={12} stroke="none">
          <path d="M0 0h12v12H0z" fill="#555" />
          <path d="M2 3.500h1M4 3.500h6M2 6.500h1M4 6.500h6M2 9.500h1M4 9.500h6" stroke="#ddd" />
        </Svg>
      </ViewButton>
      <ViewButton $w={32} aria-label="Web版式">
        <Svg w={13} stroke="none">
          <path d="M0 0h10v5L6 7v5H0z" fill="#555" />
          <path d="M2 3.500h6" stroke="#ddd" />
          <circle cx="9.500" cy="9" r="2.500" stroke="#555" strokeWidth="1.500" />
        </Svg>
      </ViewButton>
      <ViewButton $w={45} aria-label="护眼模式">
        <Svg w={12} stroke="none">
          <path d="M0 0h12v12H0z" fill="#555" />
          <path d="M6 2a3 3 0 012 5v3H4V7a3 3 0 012-5z" fill="#ddd" />
        </Svg>
        <Caret />
      </ViewButton>
      <StatusItem $w={38}>{zoom} %</StatusItem>
      <ViewButton $w={20} $end={4} aria-label="缩小" onClick={() => setZoom(zoom - 10)}>
        <Svg w={9}>
          <path d="M0 4.500h9" strokeWidth="1.500" />
        </Svg>
      </ViewButton>
      <Zoom
        aria-label="缩放比例"
        min={0}
        max={200}
        value={zoom}
        onChange={(e) => setZoom(Number(e.target.value))}
      />
      <ViewButton $w={20} aria-label="放大" onClick={() => setZoom(zoom + 10)}>
        <Svg w={9}>
          <path d="M0 4.500h9M4.500 0v9" strokeWidth="1.500" />
        </Svg>
      </ViewButton>
      <ViewButton $w={29} $end={14} aria-label="适合窗口">
        <Svg w={10}>
          <path d="M.5 3V.5H3M7 .5h2.500V3M9.500 7v2.500H7M3 9.500H.5V7M1 1l2 2M9 1L7 3M1 9l2-2M9 9L7 7" />
        </Svg>
      </ViewButton>
    </StatusBar>
  );
};

const Desktop = () => (
  <TaskBar>
    <Start aria-label="开始">
      <Svg w={32} stroke="none">
        <circle cx="16" cy="16" r="15.500" fill="#28506f" />
        <circle cx="16" cy="16" r="14.500" fill="#2580aa" />
        <path d="M2 19a14.500 14.500 0 0028 0C22 15 10 24 2 19z" fill="#25b8d3" />
        <path d="M4 10C9 0 24 0 28 10c-8-3-16 3-24 0z" fill="#8eb5cc" />
        <path d="M10 9c2-2 4-1 6 0l-2 6c-2-1-4-1-6 0z" fill="#ec6638" />
        <path d="M17 9c2 1 4 1 6 0l-2 7c-2 1-4 1-6 0z" fill="#92c84c" />
        <path d="M8 16c2-1 4-1 6 0l-2 6c-2-1-4-1-6 0z" fill="#4d9fdb" />
        <path d="M15 17c2 1 4 1 6 0l-2 6c-2 1-4 1-6 0z" fill="#fad249" />
      </Svg>
    </Start>
    <TaskGroup>
      <Task $pad={8}>
        <TaskIcon $w={32}>
          <Svg w={28} stroke="none">
            <circle cx="14" cy="14" r="13" fill="#5a9ee4" stroke="#e5eefb" strokeWidth="2" />
            <path
              d="M4 8l5-4 6 1-2 4 3 2-3 4-4-1-4-4zM17 6l6 4 1 5-5-3zM14 17l6 1-2 6-4-2z"
              fill="#dceafa"
            />
          </Svg>
        </TaskIcon>
        创作中心...
      </Task>
    </TaskGroup>
    <TaskGroup>
      <Task>
        <TaskIcon>
          <FolderIcon />
        </TaskIcon>
        2020-02
      </Task>
      <Task>
        <TaskIcon>
          <FolderIcon media />
        </TaskIcon>
        我的视频
      </Task>
      <Task>
        <TaskIcon>
          <FolderIcon />
        </TaskIcon>
        我的空中...
      </Task>
    </TaskGroup>
    <TaskGroup>
      <Task>
        <TaskIcon>
          <GirlIcon />
        </TaskIcon>
        哔哩哔哩...
      </Task>
    </TaskGroup>
    <TaskGroup>
      <Task>
        <TaskIcon>
          <Svg w={30}>
            <rect width="30" height="30" rx="5" fill="#3fa0f6" stroke="none" />
            <path d="M7 10v11l8-6 8 6V10h-4" stroke="#fff" strokeWidth="2.500" />
          </Svg>
        </TaskIcon>
        我的空...
      </Task>
    </TaskGroup>
    <TaskGroup>
      <Task>
        <TaskIcon>
          <SogouIcon />
        </TaskIcon>
        符号大全
      </Task>
    </TaskGroup>
    <Tray>
      <TrayItem $w={20} $mono>
        CH
      </TrayItem>
      <TrayItem aria-label="输入法">
        <SogouIcon w={14} />
      </TrayItem>
      <TrayItem $w={20} aria-label="帮助">
        <Svg w={14} stroke="none">
          <circle cx="7" cy="7" r="7" fill="#101c8c" />
          <path d="M5 5c0-3 5-2 4 0L7 7.500V9M7 10.500v1.500" stroke="#fff" strokeWidth="1.500" />
        </Svg>
      </TrayItem>
      <TrayItem aria-label="语言栏">
        <Svg w={8} h={16} stroke="#fff">
          <path d="M2.500 2V.5h5v3H6M.5 2.500h5v3h-5z" />
          <path d="M1 12h6l-3 3z" fill="#fff" stroke="none" />
        </Svg>
      </TrayItem>
      <TrayItem $w={76}>
        <span>62℃</span>
        <span>CPU温度</span>
      </TrayItem>
      <TrayItem aria-label="放大镜">
        <Svg w={16} stroke="none">
          <path d="M2 16c0-7 3-8 7-8s6 4 6 7z" fill="#3a9270" />
          <circle cx="8" cy="6" r="5" fill="#e5cbb5" />
          <path d="M2 3c3-5 10-3 12 0l-5 1zM5 7h8v2H5z" fill="#8c5a3c" />
          <circle cx="5" cy="10" r="4" fill="#fff" />
          <path d="M2 13l-2 3" stroke="#eee" strokeWidth="2" />
        </Svg>
      </TrayItem>
      <TrayItem aria-label="直播姬">
        <GirlIcon w={16} />
      </TrayItem>
      <TrayItem $w={24} aria-hidden="true" />
      <TrayItem aria-label="通知">
        <Svg w={12} stroke="none">
          <path d="M6 0c3 0 4 2 4 5l2 4H0l2-4c0-3 1-5 4-5zM4 10h4l-2 2z" fill="#fff" />
        </Svg>
      </TrayItem>
      <TrayItem aria-label="Java">
        <Svg w={16} stroke="#fff">
          <rect width="16" height="16" rx="1" fill="#dd7426" stroke="none" />
          <path d="M8 2c-4 3 2 4-1 6M11 4c-3 2 1 3-1 5M4 9.500c2 1 5 1 7 0M4 11.500c2 1 5 1 7 0M3 13.500h9" />
        </Svg>
      </TrayItem>
      <TrayItem aria-label="电源">
        <Svg w={14} h={16} stroke="#fff">
          <path d="M4 14.500H1.500v-12h7V5M3.500 1h3M3 5h3M3 8h2M3 11h2" />
          <path d="M7 6h6v4l-2 2H9L7 10zM10 12v3M8.500 4v2M11.500 4v2" fill="#fff" />
        </Svg>
      </TrayItem>
      <TrayItem aria-label="安全卫士">
        <Svg w={16} stroke="none">
          <circle cx="8" cy="8" r="8" fill="#f6d13c" />
          <path d="M0 8a8 8 0 018-8c3 0 5 1 6 3-3 3 1 8-2 12C6 17 0 13 0 8z" fill="#5cc83c" />
          <path d="M4 8h8M8 4v8" stroke="#153d12" strokeWidth="4" />
          <path d="M5 8h6M8 5v6" stroke="#fff" strokeWidth="2" />
        </Svg>
      </TrayItem>
      <TrayItem aria-label="网络">
        <Svg w={15} h={12} stroke="#fff">
          <path d="M1.500 12v-2M4.500 12V8M7.500 12V6M10.500 12V3M13.500 12V0" strokeWidth="2" />
        </Svg>
      </TrayItem>
      <TrayItem aria-label="音量">
        <Svg w={15} h={14} stroke="#fff">
          <path d="M1 5h3l4-4v12L4 9H1z" fill="#dfe5ed" />
          <path d="M10 4c1.500 2 1.500 4 0 6M12 2c2.500 3 2.500 7 0 10" />
        </Svg>
      </TrayItem>
      <TrayItem $w={92}>
        <span>20:23</span>
        <span>18/02/2020</span>
      </TrayItem>
      <TrayItem $w={34} aria-label="4">
        <Svg w={22} h={24} stroke="none">
          <path d="M4 6h13v17H4zM0 9h3v14H0z" fill="#fff" />
          <path d="M6 11h4v3H6zM11 11.500h4M11 13.500h4M6 16.500h9M6 19.500h9" stroke="#66788f" />
          <path d="M11 0h11v11H11z" fill="#202427" />
          <text x="14" y="9" fill="#fff" fontSize="9">
            4
          </text>
        </Svg>
      </TrayItem>
      <ShowDesktop aria-label="显示桌面" />
    </Tray>
  </TaskBar>
);

const App = () => {
  const [tab, setTab] = useState("开始");
  return (
    <>
      <GlobalStyle />
      <Window>
        <Title />
        <TabList>
          {ribbonTabs.map(([name, w]) => (
            <RibbonTab key={name} $w={w} $active={name === tab} onClick={() => setTab(name)}>
              {name}
            </RibbonTab>
          ))}
        </TabList>
        <Ribbon>
          <ClipboardGroup />
          <FontGroup />
          <ParagraphGroup />
          <StyleGroup />
          <EditGroups />
        </Ribbon>
        <Documents />
        <Editor />
        <Status />
        <Desktop />
      </Window>
    </>
  );
};

export default App;
